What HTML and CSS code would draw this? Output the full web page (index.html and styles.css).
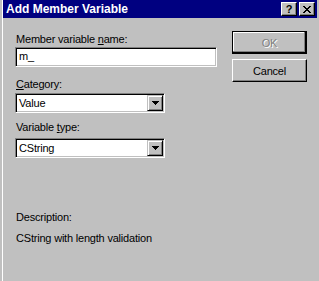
FILE: index.html
```html
<!DOCTYPE html>
<html lang="en">
<head>
  <meta charset="UTF-8" />
  <title>Add Member Variable</title>
  <link rel="stylesheet" href="styles.css">
</head>
<body>
  <div class="window">
    <div class="titlebar">
      <span class="title">Add Member Variable</span>
      <div class="title-buttons">
        <button class="tbtn help">?</button>
        <button class="tbtn close">
          <svg width="8" height="7" viewBox="0 0 8 7" shape-rendering="crispEdges">
            <path d="M0 0h2v1h-2zM6 0h2v1h-2zM1 1h2v1h-2zM5 1h2v1h-2zM2 2h4v1h-4zM3 3h2v1h-2zM2 4h4v1h-4zM1 5h2v1h-2zM5 5h2v1h-2zM0 6h2v1h-2zM6 6h2v1h-2z" fill="#000"/>
          </svg>
        </button>
      </div>
    </div>

    <div class="client">
      <div class="fields">
        <label class="label">Member variable <u>n</u>ame:</label>
        <div class="edit">m_</div>

        <label class="label category"><u>C</u>ategory:</label>
        <div class="combo">
          <span class="value">Value</span>
          <span class="drop">
            <svg width="7" height="4" viewBox="0 0 7 4" shape-rendering="crispEdges">
              <path d="M0 0h7v1h-7zM1 1h5v1h-5zM2 2h3v1h-3zM3 3h1v1h-1z" fill="#000"/>
            </svg>
          </span>
        </div>

        <label class="label vartype">Variable <u>t</u>ype:</label>
        <div class="combo combo-type">
          <span class="value">CString</span>
          <span class="drop">
            <svg width="7" height="4" viewBox="0 0 7 4" shape-rendering="crispEdges">
              <path d="M0 0h7v1h-7zM1 1h5v1h-5zM2 2h3v1h-3zM3 3h1v1h-1z" fill="#000"/>
            </svg>
          </span>
        </div>

        <div class="desc">
          <p class="desc-title">Description:</p>
          <p class="desc-text">CString with length validation</p>
        </div>
      </div>

      <div class="actions">
        <button class="btn default" disabled>OK</button>
        <button class="btn cancel">Cancel</button>
      </div>
    </div>
  </div>
</body>
</html>
```

FILE: styles.css
```css
* {
  box-sizing: border-box;
}

body {
  margin: 0;
  background: #c0c0c0;
  font-family: 'Liberation Sans', Arial, sans-serif;
  font-size: 11px;
  letter-spacing: -0.2px;
  color: #000;
  overflow: hidden;
}

.window {
  height: 281px;
  margin-left: 2px;
  border-left: 1px solid #fff;
}

/* title bar */
.titlebar {
  width: 314px;
  height: 18px;
  background: #000080;
  display: flex;
  align-items: center;
  justify-content: space-between;
  padding: 0 2px 0 3px;
}

.title {
  color: #fff;
  font-weight: bold;
  font-size: 12px;
  letter-spacing: 0;
  line-height: 13px;
}

.title-buttons {
  display: flex;
  gap: 2px;
}

.tbtn {
  width: 16px;
  height: 14px;
  padding: 0;
  margin: 0;
  background: #c0c0c0;
  border: 1px solid;
  border-color: #fff #000 #000 #fff;
  box-shadow: inset -1px -1px #808080;
  display: flex;
  align-items: center;
  justify-content: center;
  font-family: 'Liberation Sans', Arial, sans-serif;
  font-weight: bold;
  font-size: 11px;
  line-height: 11px;
  color: #000;
}

/* client area */
.client {
  display: flex;
  padding: 13px 0 0 12px;
}

.fields {
  width: 202px;
  padding-top: 2px;
  display: flex;
  flex-direction: column;
}

.label {
  display: block;
  height: 13px;
  line-height: 13px;
  padding-left: 1px;
}

.label u {
  text-decoration: underline;
}

.category {
  margin-top: 11px;
}

.vartype {
  margin-top: 8px;
}

.edit {
  margin-top: 1px;
  height: 20px;
  background: #fff;
  border: 1px solid;
  border-color: #808080 #fff #fff #808080;
  box-shadow: inset 1px 1px #000, inset -1px -1px #c0c0c0;
  padding-left: 3px;
  line-height: 17px;
}

.combo {
  margin-top: 2px;
  width: 150px;
  height: 20px;
  background: #fff;
  border: 1px solid;
  border-color: #808080 #fff #fff #808080;
  box-shadow: inset 1px 1px #000, inset -1px -1px #c0c0c0;
  padding: 2px 1px 2px 3px;
  display: flex;
  align-items: center;
  justify-content: space-between;
}

.combo-type {
  margin-top: 4px;
}

.drop {
  width: 16px;
  height: 16px;
  background: #c0c0c0;
  border: 1px solid;
  border-color: #c0c0c0 #000 #000 #c0c0c0;
  box-shadow: inset 1px 1px #fff, inset -1px -1px #808080;
  display: flex;
  align-items: center;
  justify-content: center;
}

.desc {
  margin-top: 53px;
  padding-left: 1px;
}

.desc p {
  margin: 0;
  line-height: 13px;
}

.desc-text {
  margin-top: 8px !important;
}

/* buttons */
.actions {
  margin-left: 15px;
  display: flex;
  flex-direction: column;
  gap: 5px;
}

.btn {
  width: 75px;
  height: 23px;
  padding: 0;
  margin: 0;
  background: #c0c0c0;
  font-family: 'Liberation Sans', Arial, sans-serif;
  font-size: 11px;
  letter-spacing: -0.2px;
  color: #000;
  border: 1px solid;
  border-color: #fff #000 #000 #fff;
  box-shadow: inset -1px -1px #808080;
}

.btn.default {
  border-color: #000;
  box-shadow: inset -1px -1px #000, inset -2px -2px #808080, inset 1px 1px #fff;
}

.btn:disabled {
  color: #808080;
  text-shadow: 1px 1px #fff;
}
```
